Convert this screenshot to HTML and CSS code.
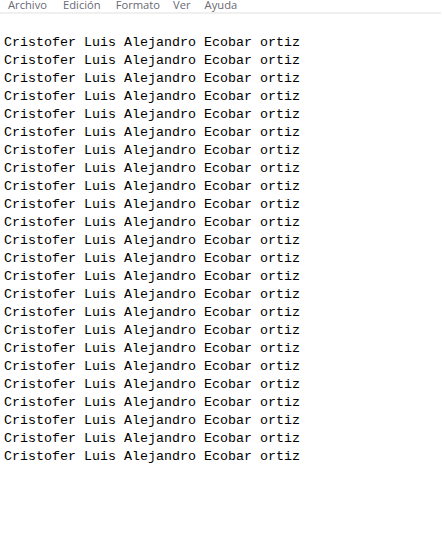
FILE: index.html
```html
<!DOCTYPE html>
<html lang="es">
<head>
<meta charset="utf-8">
<title>Bloc de notas</title>
<link rel="stylesheet" href="styles.css">
</head>
<body>
<div class="window">
  <nav class="menubar">
    <span class="menu m-archivo">Archivo</span>
    <span class="menu m-edicion">Edición</span>
    <span class="menu m-formato">Formato</span>
    <span class="menu m-ver">Ver</span>
    <span class="menu m-ayuda">Ayuda</span>
  </nav>
  <div class="divider"></div>
  <pre class="editor">Cristofer Luis Alejandro Ecobar ortiz
Cristofer Luis Alejandro Ecobar ortiz
Cristofer Luis Alejandro Ecobar ortiz
Cristofer Luis Alejandro Ecobar ortiz
Cristofer Luis Alejandro Ecobar ortiz
Cristofer Luis Alejandro Ecobar ortiz
Cristofer Luis Alejandro Ecobar ortiz
Cristofer Luis Alejandro Ecobar ortiz
Cristofer Luis Alejandro Ecobar ortiz
Cristofer Luis Alejandro Ecobar ortiz
Cristofer Luis Alejandro Ecobar ortiz
Cristofer Luis Alejandro Ecobar ortiz
Cristofer Luis Alejandro Ecobar ortiz
Cristofer Luis Alejandro Ecobar ortiz
Cristofer Luis Alejandro Ecobar ortiz
Cristofer Luis Alejandro Ecobar ortiz
Cristofer Luis Alejandro Ecobar ortiz
Cristofer Luis Alejandro Ecobar ortiz
Cristofer Luis Alejandro Ecobar ortiz
Cristofer Luis Alejandro Ecobar ortiz
Cristofer Luis Alejandro Ecobar ortiz
Cristofer Luis Alejandro Ecobar ortiz
Cristofer Luis Alejandro Ecobar ortiz
Cristofer Luis Alejandro Ecobar ortiz</pre>
</div>
</body>
</html>
```

FILE: styles.css
```css
html, body {
  margin: 0;
  padding: 0;
  background: #ffffff;
}

.window {
  width: 442px;
  height: 552px;
  overflow: hidden;
  background: #ffffff;
}

.menubar {
  display: flex;
  height: 12px;
  overflow: hidden;
  font-family: "Open Sans", "Noto Sans", sans-serif;
  font-size: 11.2px;
  line-height: 12px;
  color: #6a6a74;
}

.menu {
  display: block;
  margin-top: -1px;
  white-space: nowrap;
}

.m-archivo { margin-left: 8px; }
.m-edicion { margin-left: 16px; }
.m-formato { margin-left: 15px; }
.m-ver { margin-left: 13px; }
.m-ayuda { margin-left: 14px; }

.divider {
  height: 2px;
  width: 441px;
  background: #f0f0f0;
}

.editor {
  margin: 0;
  padding: 20px 0 0 4px;
  font-family: "Liberation Mono", "DejaVu Sans Mono", monospace;
  font-size: 13.33px;
  line-height: 18px;
  color: #000000;
}
```
